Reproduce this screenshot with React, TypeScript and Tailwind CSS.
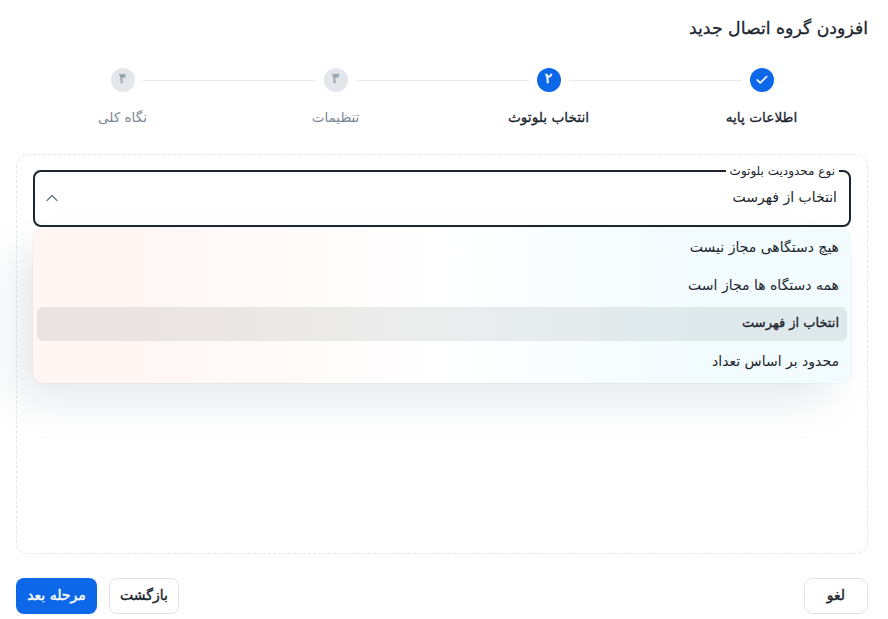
import React from "react";
import { Check, ChevronUp } from "lucide-react";

const steps = [
  { label: "اطلاعات پایه", state: "done", n: "۱" },
  { label: "انتخاب بلوتوث", state: "active", n: "۲" },
  { label: "تنظیمات", state: "todo", n: "۳" },
  { label: "نگاه کلی", state: "todo", n: "۴" },
];

const options = [
  { label: "هیچ دستگاهی مجاز نیست" },
  { label: "همه دستگاه ها مجاز است" },
  { label: "انتخاب از فهرست", selected: true },
  { label: "محدود بر اساس تعداد" },
];

export default function App() {
  return (
    <div
      dir="rtl"
      className="w-[888px] h-[619px] bg-white overflow-hidden pt-4 pb-4 pl-4 pr-5 text-[#1c252e] flex flex-col"
      style={{ fontFamily: '"DejaVu Sans", sans-serif' }}
    >
      <h1 className="text-[17.3px] leading-[24px] [-webkit-text-stroke:0.3px]">افزودن گروه اتصال جدید</h1>

      <div className="mt-[28px] flex items-center px-[94.5px]">
        {steps.map((s, i) => (
          <React.Fragment key={s.label}>
            {s.state === "done" ? (
              <span className="w-6 h-6 shrink-0 rounded-full bg-[#0c68e9] flex items-center justify-center text-white">
                <Check size={14} strokeWidth={3} />
              </span>
            ) : (
              <span
                className={
                  s.state === "active"
                    ? "w-6 h-6 shrink-0 rounded-full bg-[#0c68e9] flex items-center justify-center text-white text-[14px] leading-none pb-[5px] [-webkit-text-stroke:0.5px]"
                    : "w-6 h-6 shrink-0 rounded-full bg-[#e3e6ea] flex items-center justify-center text-[#919eab] text-[14px] leading-none pb-[5px] [-webkit-text-stroke:0.4px]"
                }
              >
                {s.n}
              </span>
            )}
            {i < 3 && <span className="flex-1 h-px bg-[#e8ebee] mx-2" />}
          </React.Fragment>
        ))}
      </div>

      <div className="mt-[14px] grid grid-cols-4">
        {steps.map((s) => (
          <div
            key={s.label}
            className={
              s.state === "todo"
                ? "text-center text-[13.5px] leading-[22px] text-[#7b8895]"
                : "text-center text-[13.7px] leading-[22px] text-[#1c252e] [-webkit-text-stroke:0.3px]"
            }
          >
            {s.label}
          </div>
        ))}
      </div>

      <div className="relative shrink-0 mt-[26px] h-[400px] rounded-xl border border-dashed border-[#e3e6ea] px-4 pt-[15px]">
        <div className="relative h-[57px] rounded-lg border-2 border-[#1c252e] flex items-center justify-between pr-3 pl-[7px] pb-[2px] text-[14px]">
          <span className="absolute -top-[9px] right-[10px] bg-white px-1 text-[12px] leading-[16px]">
            نوع محدودیت بلوتوث
          </span>
          <span>انتخاب از فهرست</span>
          <ChevronUp size={20} strokeWidth={1.5} className="text-[#637381]" />
        </div>

        <div className="absolute top-[73px] left-4 right-4 h-[155px] rounded-xl bg-gradient-to-r from-[#fff5f3] from-8% via-[#ffffff] via-50% to-[#f2fbfe] to-82% shadow-[0_0_2px_rgba(145,158,171,0.24),-20px_20px_40px_-4px_rgba(145,158,171,0.24)] px-1 pt-[3px] flex flex-col text-[14px] text-[#1c252e]">
          {options.map((o) => (
            <div
              key={o.label}
              className={
                o.selected
                  ? "h-[34px] mb-1 pb-[2px] shrink-0 rounded-md bg-[rgba(30,50,50,0.09)] flex items-center px-2 text-[13px] [-webkit-text-stroke:0.35px]"
                  : "h-[34px] mb-1 pb-[2px] shrink-0 rounded-md flex items-center px-2"
              }
            >
              {o.label}
            </div>
          ))}
        </div>
      </div>

      <div className="mt-6 flex items-center justify-between">
        <button className="w-16 h-9 pb-[2px] rounded-lg border border-[#dfe3e8] text-[14px] [-webkit-text-stroke:0.4px] bg-white">لغو</button>
        <div className="flex items-center gap-3">
          <button className="w-[70px] h-9 pb-[2px] rounded-lg border border-[#dfe3e8] text-[14px] [-webkit-text-stroke:0.4px] bg-white">بازگشت</button>
          <button className="w-[81px] h-9 pb-[2px] rounded-lg bg-[#0c68e9] text-white text-[14px] [-webkit-text-stroke:0.4px]">مرحله بعد</button>
        </div>
      </div>
    </div>
  );
}
